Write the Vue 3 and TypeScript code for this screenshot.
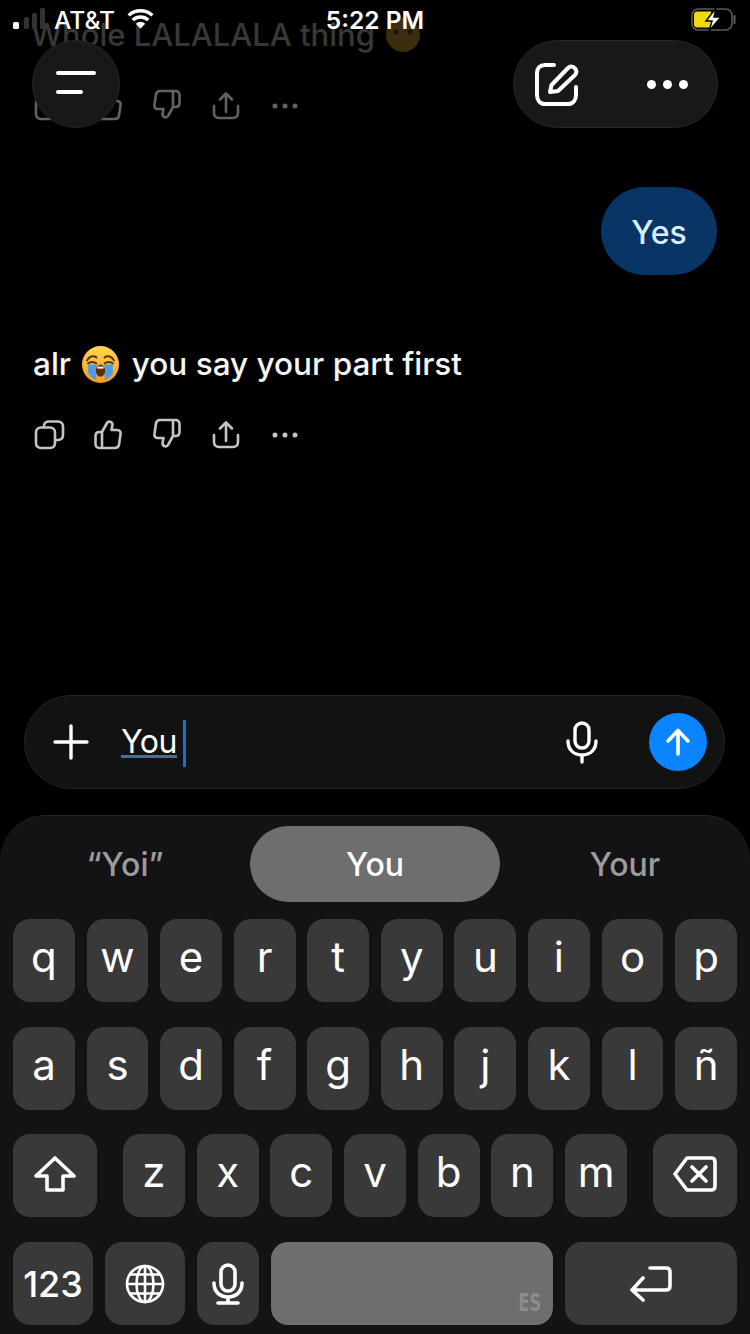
<template>
  <div class="phone">
    <div class="chat">
      <p class="msg old">
        Whole LALALALA thing
        <svg class="old-emoji" viewBox="0 0 36 36">
          <circle cx="18" cy="18" r="17" fill="#3a2d10" />
          <circle cx="11" cy="15" r="2.5" fill="#191408" />
          <circle cx="25" cy="15" r="2.5" fill="#191408" />
        </svg>
      </p>
      <div class="actions dim">
        <svg v-for="a in actions" :key="a.name" viewBox="0 0 32 32" :class="{ flip: a.flip }">
          <path :d="a.d" :stroke-width="a.width" />
        </svg>
      </div>

      <div class="bubble">Yes</div>

      <p class="msg reply">
        alr
        <svg class="emoji" viewBox="0 0 36 36">
          <defs>
            <linearGradient id="face" x1="0" y1="0" x2="0" y2="1">
              <stop offset="0" stop-color="#ffd84f" />
              <stop offset="1" stop-color="#f59b1f" />
            </linearGradient>
          </defs>
          <circle cx="18" cy="18" r="18" fill="url(#face)" />
          <path d="M5 14c2-4 6-5 9-3M31 14c-2-4-6-5-9-3" fill="none" stroke="#5a3410" stroke-width="2" stroke-linecap="round" />
          <path d="M6 17c2-2 6-2 8 0M22 17c2-2 6-2 8 0" fill="none" stroke="#5a3410" stroke-width="2" stroke-linecap="round" />
          <path d="M6 18h8v15c-4-1-7-4-8-7zM22 18h8v8c-1 3-4 6-8 7z" fill="#4f9be8" />
          <ellipse cx="18" cy="24" rx="4.5" ry="6" fill="#5c2b12" />
          <path d="M15 20h6v2h-6z" fill="#f4f0e6" />
        </svg>
        you say your part first
      </p>
      <div class="actions">
        <svg v-for="a in actions" :key="a.name" viewBox="0 0 32 32" :class="{ flip: a.flip }">
          <path :d="a.d" :stroke-width="a.width" />
        </svg>
      </div>
    </div>

    <div class="composer">
      <svg class="plus" viewBox="0 0 36 36">
        <path d="M18 2v32M2 18h32" />
      </svg>
      <div class="draft">
        <span class="word">You</span>
        <span class="caret"></span>
      </div>
      <svg class="voice" viewBox="0 0 34 44">
        <rect x="10" y="3" width="14" height="25" rx="7" />
        <path d="M3 21c0 9 6 14 14 14s14-5 14-14M17 35v7" />
      </svg>
      <div class="send">
        <svg viewBox="0 0 30 30">
          <path d="M15 27V4M5 14 15 3.500 25 14" />
        </svg>
      </div>
    </div>

    <div class="keyboard">
      <div class="suggestions">
        <span>“Yoi”</span>
        <span class="picked">You</span>
        <span>Your</span>
      </div>
      <div class="row letters">
        <div v-for="k in rowOne" :key="k" class="key">{{ k }}</div>
      </div>
      <div class="row letters">
        <div v-for="k in rowTwo" :key="k" class="key">{{ k }}</div>
      </div>
      <div class="row third">
        <div class="key wide">
          <svg width="42" height="36" viewBox="0 0 42 36">
            <path d="M21 2 40 20H29V34H13V20H2Z" />
          </svg>
        </div>
        <div class="letters-mid">
          <div v-for="k in rowThree" :key="k" class="key">{{ k }}</div>
        </div>
        <div class="key wide">
          <svg width="44" height="36" viewBox="0 0 44 36">
            <path d="M14 2H38C40.500 2 42 3.500 42 6V30C42 32.500 40.500 34 38 34H14L2 18ZM19 11 33 25M33 11 19 25" />
          </svg>
        </div>
      </div>
      <div class="row bottom">
        <div class="key num">123</div>
        <div class="key globe">
          <svg width="40" height="40" viewBox="0 0 40 40">
            <circle cx="20" cy="20" r="18" />
            <ellipse cx="20" cy="20" rx="8.500" ry="18" />
            <path d="M20 2V38M2 20H38M5 10.500H35M5 29.500H35" />
          </svg>
        </div>
        <div class="key">
          <svg width="32" height="42" viewBox="0 0 32 42">
            <rect x="9" y="2" width="14" height="26" rx="7" />
            <path d="M2 20c0 9 6 14 14 14s14-5 14-14M16 34v6M6 40H26" />
          </svg>
        </div>
        <div class="key space"><span class="lang">ES</span></div>
        <div class="key enter">
          <svg width="42" height="38" viewBox="0 0 42 38">
            <path d="M20 3H36C38.500 3 40 4.500 40 7V21C40 23.500 38.500 25 36 25H2M13 13 2 25 13 35" />
          </svg>
        </div>
      </div>
    </div>

    <!-- floating stuff over the scrolled chat -->
    <div class="status">
      <div class="status-left">
        <svg class="signal" width="34" height="22" viewBox="0 0 34 22">
          <rect x="0" y="14" width="6" height="7" rx="1.500" fill="#fff" />
          <rect x="11" y="9" width="5" height="12" rx="1.500" fill="#333" />
          <rect x="19" y="5" width="5" height="16" rx="1.500" fill="#333" />
          <rect x="27" y="0" width="5" height="21" rx="1.500" fill="#333" />
        </svg>
        <span class="carrier">AT&amp;T</span>
        <svg class="wifi" width="31" height="22" viewBox="0 0 30 21">
          <path d="M15 20 10.500 15a6.500 6.500 0 0 1 9 0Z" fill="#fff" />
          <path d="M7.500 11.500a11 11 0 0 1 15 0M3.500 7a17 17 0 0 1 23 0" fill="none" stroke="#fff" stroke-width="3.200" />
        </svg>
      </div>
      <span class="clock">5:22 PM</span>
      <svg class="battery" width="46" height="23" viewBox="0 0 46 23">
        <rect x="1" y="1" width="40" height="21" rx="6.500" fill="none" stroke="#5c5c5c" stroke-width="1.500" />
        <path d="M6 3.500H20V19.500H6C4 19.500 3 18 3 16V7C3 5 4 3.500 6 3.500Z" fill="#f2d90f" />
        <path d="M43.500 8v7" stroke="#5c5c5c" stroke-width="2" stroke-linecap="round" />
        <path d="M25 0 15 13H21L18 23 30 9H23Z" fill="#fff" stroke="#000" stroke-width="1.500" />
      </svg>
    </div>

    <button class="menu" type="button">
      <svg width="44" height="28" viewBox="0 0 44 28">
        <path d="M4 3H40M4 22H27" />
      </svg>
    </button>
    <div class="tools">
      <svg class="compose" width="46" height="46" viewBox="0 0 46 46">
        <path d="M20 4H11C6 4 3 7 3 12V34C3 39 6 43 11 43H34C39 43 42 39 42 34V26" />
        <path d="M16 31 17.500 24 34 7C36 5 39 5 41 7.500 43 9.500 42.500 12 41 14L24 30Z" />
      </svg>
      <div class="more"><i></i><i></i><i></i></div>
    </div>
  </div>
</template>

<script setup lang="ts">
type Action = {
  name: string
  d: string
  width: number
  flip?: boolean
}

const thumb =
  'M10 14 15 5C16 3 20.500 3 20.500 7L19.500 12H25C28 12 29 14 28.500 16.500L27 26.500C26.500 29 25 30 23 30H7.500C5 30 3.500 28.500 3.500 26V18C3.500 15.500 5 14 7.500 14H10M10 14V30'

const actions: Action[] = [
  {
    name: 'copy',
    d: 'M8 9.500H17C20 9.500 22 11.500 22 14.500V25C22 28 20 30 17 30H8C5 30 3 28 3 25V14.500C3 11.500 5 9.500 8 9.500ZM11 9V8C11 5 13 3.500 16 3.500H25C28 3.500 30 5.500 30 8.500V17C30 20 28 22 25 22H22',
    width: 2.6,
  },
  { name: 'like', d: thumb, width: 2.6 },
  { name: 'dislike', d: thumb, width: 2.6, flip: true },
  { name: 'share', d: 'M16 5V23M10 10.500 16 4.500 22 10.500M4 17V24C4 27 6 29 9 29H23C26 29 28 27 28 24V17', width: 2.6 },
  { name: 'more', d: 'M6 17H6.010M16 17H16.010M26 17H26.010', width: 5 },
]

const rowOne = ['q', 'w', 'e', 'r', 't', 'y', 'u', 'i', 'o', 'p']
const rowTwo = ['a', 's', 'd', 'f', 'g', 'h', 'j', 'k', 'l', 'ñ']
const rowThree = ['z', 'x', 'c', 'v', 'b', 'n', 'm']
</script>

<style>
html,
body {
  margin: 0;
  background: #000;
}
</style>

<style scoped>
.phone {
  position: relative;
  width: 750px;
  height: 1334px;
  overflow: hidden;
  display: flex;
  flex-direction: column;
  background: #000;
  color: #fff;
  font-family: Inter, "Liberation Sans", sans-serif;
}

.chat {
  flex: 1;
  display: flex;
  flex-direction: column;
  padding: 15px 33px 0;
  min-height: 0;
}
.msg {
  margin: 0;
  font-size: 31.500px;
  font-weight: 500;
  line-height: 40px;
  white-space: nowrap;
}
.old {
  color: #383838;
  font-size: 31px;
  margin-left: -2px;
}
.old-emoji {
  width: 36px;
  height: 36px;
  vertical-align: -7px;
  margin-left: 2px;
}
.reply {
  margin-top: 69px;
  color: #f6f6f6;
}
.emoji {
  width: 37px;
  height: 37px;
  vertical-align: -8px;
  margin: 0 4px 0 3px;
}

.actions {
  display: flex;
  gap: 27px;
  margin-top: 34px;
}
.actions svg {
  width: 32px;
  height: 32px;
  fill: none;
  stroke: #c4c4c4;
  stroke-linecap: round;
  stroke-linejoin: round;
}
.actions .flip {
  transform: rotate(180deg);
}
.actions.dim {
  opacity: 0.5;
}

.bubble {
  align-self: flex-end;
  margin-top: 66px;
  width: 116px;
  height: 88px;
  box-sizing: border-box;
  padding-top: 3px;
  display: flex;
  align-items: center;
  justify-content: center;
  border-radius: 44px;
  background: #083565;
  color: #d8edff;
  font-size: 32px;
  font-weight: 500;
}

.composer {
  flex: none;
  display: flex;
  align-items: center;
  box-sizing: border-box;
  width: 701px;
  height: 94px;
  margin: 0 0 26px 24px;
  padding: 0 17px 0 28px;
  border: 1px solid #222;
  border-radius: 47px;
  background: #121212;
}
.plus {
  width: 36px;
  height: 36px;
  fill: none;
  stroke: #fff;
  stroke-width: 3.4;
  stroke-linecap: round;
}
.draft {
  flex: 1;
  display: flex;
  align-items: center;
  margin-left: 32px;
  padding-top: 3px;
  font-size: 32px;
}
.word {
  border-bottom: 3px solid #41709f;
  line-height: 26px;
  letter-spacing: -0.5px;
}
.caret {
  width: 3px;
  height: 47px;
  margin-left: 6px;
  background: #1a6fd8;
}
.voice {
  width: 34px;
  height: 44px;
  margin-right: 50px;
  fill: none;
  stroke: #fff;
  stroke-width: 3.4;
  stroke-linecap: round;
}
.send {
  width: 58px;
  height: 58px;
  display: flex;
  align-items: center;
  justify-content: center;
  border-radius: 50%;
  background: #0a84ff;
}
.send svg {
  width: 30px;
  height: 30px;
  fill: none;
  stroke: #fff;
  stroke-width: 3.6;
  stroke-linecap: round;
  stroke-linejoin: round;
}

.keyboard {
  flex: none;
  box-sizing: border-box;
  height: 519px;
  padding: 10px 13px 0;
  border-top: 1px solid #262626;
  border-radius: 46px 46px 0 0;
  background: #131315;
}
.suggestions {
  display: grid;
  grid-template-columns: repeat(3, 250px);
  height: 76px;
  margin: 0 -13px 17px;
  color: #9c9c9c;
  font-size: 32px;
  font-weight: 500;
}
.suggestions span {
  display: flex;
  align-items: center;
  justify-content: center;
}
.suggestions .picked {
  border-radius: 38px;
  background: #6e6e6e;
  color: #fff;
}

.row {
  height: 83px;
  margin-bottom: 24.700px;
}
.letters {
  display: grid;
  grid-template-columns: repeat(10, 1fr);
  gap: 11.700px;
}
.third,
.bottom {
  display: flex;
}
.third {
  justify-content: space-between;
}
.letters-mid {
  display: flex;
  gap: 11.700px;
}
.letters-mid .key {
  width: 62px;
}
.bottom {
  gap: 12px;
}
.bottom .key {
  width: 62px;
}

.key {
  display: flex;
  align-items: center;
  justify-content: center;
  border-radius: 17px;
  background: #393939;
  color: #fff;
  font-size: 42px;
  line-height: 1;
  padding-bottom: 7px;
  box-sizing: border-box;
}
.key svg {
  fill: none;
  stroke: #fff;
  stroke-width: 3.6;
  stroke-linecap: round;
  stroke-linejoin: round;
}
.key.wide {
  width: 84px;
  padding-bottom: 4px;
}
.bottom .key {
  padding-bottom: 0;
}
.bottom .num {
  width: 80px;
  font-size: 36px;
  font-weight: 500;
}
.bottom .globe {
  width: 80px;
}
.bottom .globe svg {
  stroke-width: 2.6;
}
.bottom .space {
  position: relative;
  width: 282px;
  background: #6e6e6e;
}
.bottom .enter {
  width: 172px;
}
.lang {
  position: absolute;
  right: 7px;
  bottom: 10px;
  color: #8c8c8c;
  font-family: "DejaVu Sans Condensed", "Liberation Sans", sans-serif;
  font-size: 25px;
  font-weight: 700;
  transform: scaleX(0.72);
}

.status {
  position: absolute;
  top: 0;
  left: 0;
  right: 0;
  height: 40px;
  display: grid;
  grid-template-columns: 1fr auto 1fr;
  align-items: center;
  padding: 0 13px 0 13px;
  box-sizing: border-box;
}
.status-left {
  display: flex;
  align-items: center;
  font-size: 24.500px;
  font-weight: 500;
}
.signal {
  margin-top: -2px;
}
.carrier {
  margin-left: 7px;
}
.wifi {
  margin-left: 10px;
  margin-top: -2px;
}
.clock {
  font-size: 24.500px;
  font-weight: 600;
}
.battery {
  justify-self: end;
  margin-top: -2px;
}

.menu {
  position: absolute;
  top: 40px;
  left: 32px;
  width: 88px;
  height: 88px;
  display: flex;
  align-items: center;
  justify-content: center;
  padding: 0;
  border: 1px solid #262626;
  border-radius: 50%;
  background: #181818;
}
.menu svg {
  fill: none;
  stroke: #fff;
  stroke-width: 4;
  stroke-linecap: round;
}
.tools {
  position: absolute;
  top: 40px;
  left: 513px;
  width: 205px;
  height: 88px;
  display: flex;
  align-items: center;
  box-sizing: border-box;
  padding-left: 20px;
  border: 1px solid #262626;
  border-radius: 44px;
  background: #181818;
}
.compose {
  fill: none;
  stroke: #fff;
  stroke-width: 4;
  stroke-linecap: round;
  stroke-linejoin: round;
}
.more {
  display: flex;
  gap: 7px;
  margin-left: 67px;
}
.more i {
  width: 9px;
  height: 9px;
  border-radius: 50%;
  background: #fff;
}
</style>
